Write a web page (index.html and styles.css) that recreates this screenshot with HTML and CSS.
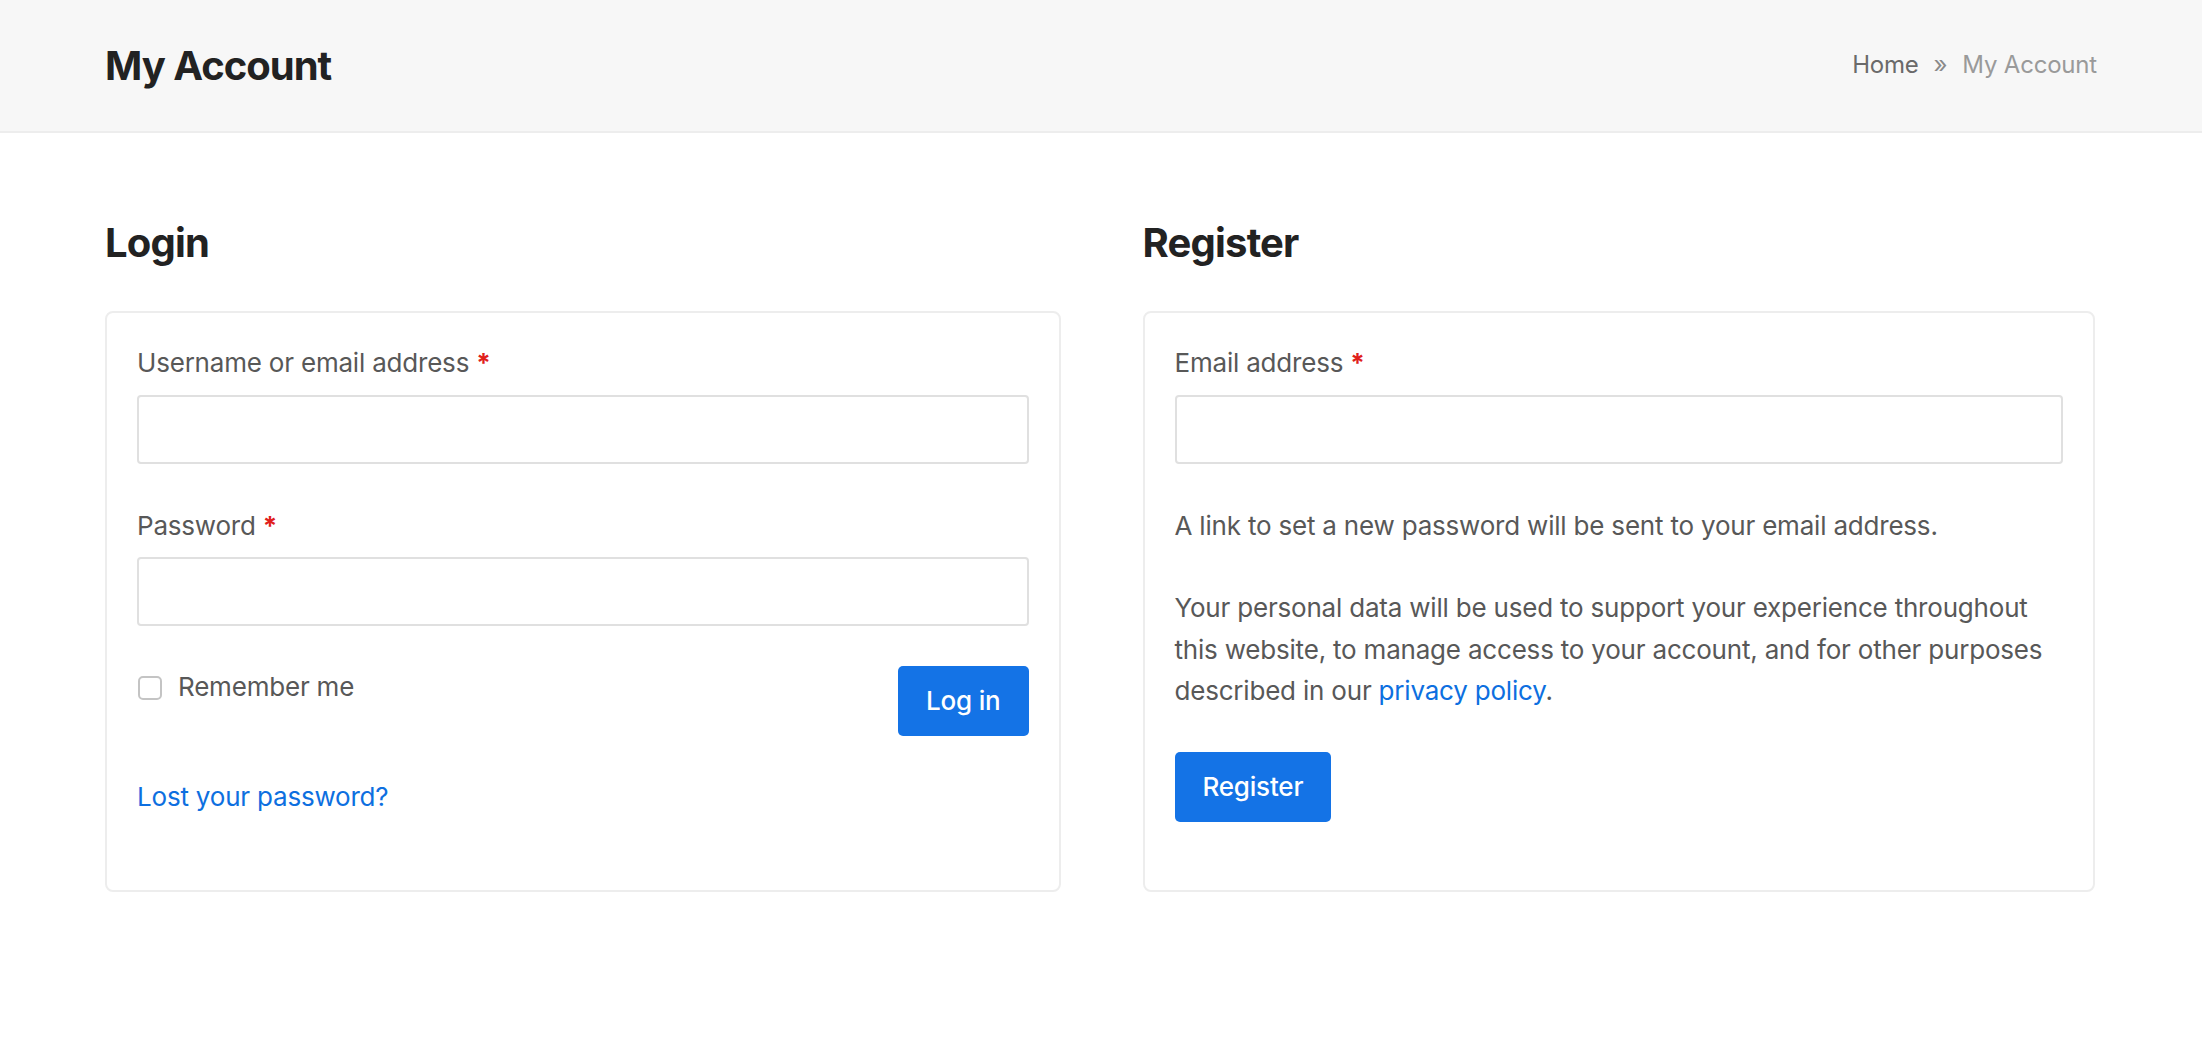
FILE: index.html
```html
<!DOCTYPE html>
<html lang="en">
<head>
<meta charset="utf-8">
<title>My Account</title>
<link rel="stylesheet" href="styles.css">
</head>
<body>
<header class="page-header">
  <div class="container header-inner">
    <h1 class="page-title">My Account</h1>
    <nav class="breadcrumb">
      <a class="crumb-link" href="#">Home</a><span class="crumb-sep">»</span><span class="crumb-current">My Account</span>
    </nav>
  </div>
</header>
<main class="container main">
  <div class="columns">
    <section class="col">
      <h2 class="col-title">Login</h2>
      <form class="card">
        <div class="field">
          <label class="field-label">Username or email address <span class="required">*</span></label>
          <input class="text-input" type="text">
        </div>
        <div class="field">
          <label class="field-label">Password <span class="required">*</span></label>
          <input class="text-input" type="password">
        </div>
        <div class="form-row">
          <label class="remember"><input class="checkbox" type="checkbox"><span>Remember me</span></label>
          <button class="btn" type="button">Log in</button>
        </div>
        <p class="lost"><a class="link" href="#">Lost your password?</a></p>
      </form>
    </section>
    <section class="col">
      <h2 class="col-title">Register</h2>
      <form class="card">
        <div class="field">
          <label class="field-label">Email address <span class="required">*</span></label>
          <input class="text-input" type="email">
        </div>
        <p class="note">A link to set a new password will be sent to your email address.</p>
        <p class="privacy">Your personal data will be used to support your experience throughout this website, to manage access to your account, and for other purposes described in our <a class="link" href="#">privacy policy</a>.</p>
        <div class="btn-row">
          <button class="btn" type="button">Register</button>
        </div>
      </form>
    </section>
  </div>
</main>
</body>
</html>
```

FILE: styles.css
```css
* { box-sizing: border-box; }

html, body {
  margin: 0;
  padding: 0;
  background: #ffffff;
}

body {
  font-family: "Inter", "Liberation Sans", sans-serif;
  font-size: 26px;
  line-height: 1.6;
  letter-spacing: -0.2px;
  color: #585858;
}

.container {
  max-width: 1992px;
  margin: 0 auto;
}

.page-header {
  background: #f7f7f7;
  border-bottom: 2px solid #ededed;
}

.header-inner {
  height: 131px;
  display: flex;
  align-items: center;
  justify-content: space-between;
}

.page-title {
  margin: 0;
  font-size: 40px;
  line-height: 1.2;
  font-weight: 700;
  letter-spacing: -0.025em;
  color: #222222;
}

.breadcrumb {
  font-size: 24px;
  line-height: 1.6;
  color: #999999;
  display: flex;
  align-items: center;
}

.crumb-link {
  color: #6a6a6a;
  text-decoration: none;
}

.crumb-sep {
  padding: 0 15px;
  color: #8a8a8a;
}

.crumb-current {
  color: #9a9a9a;
}

.main {
  padding-top: 86px;
  padding-bottom: 80px;
}

.columns {
  display: grid;
  grid-template-columns: 955fr 952fr;
  column-gap: 82px;
  margin-right: 2px;
}

.col {
  display: flex;
  flex-direction: column;
}

.col-title {
  margin: 0 0 44px;
  font-size: 40px;
  line-height: 1.2;
  font-weight: 700;
  letter-spacing: -0.02em;
  color: #222222;
}

.card {
  flex: 1;
  margin: 0;
  border: 2px solid #ededed;
  border-radius: 8px;
  padding: 29px 30px 68px;
}

.field {
  display: flex;
  flex-direction: column;
}

.field + .field {
  margin-top: 41px;
}

.field-label {
  display: block;
  margin-bottom: 11px;
}

.required {
  color: #e0201b;
  font-weight: 700;
}

.text-input {
  display: block;
  width: 100%;
  height: 69px;
  border: 2px solid #e0e0e0;
  border-radius: 4px;
  background: #ffffff;
  font: inherit;
  padding: 0 16px;
  margin: 0;
}

.form-row {
  margin-top: 40px;
  display: flex;
  justify-content: space-between;
  align-items: flex-start;
}

.remember {
  display: flex;
  align-items: center;
  gap: 16px;
}

.checkbox {
  appearance: none;
  -webkit-appearance: none;
  width: 24px;
  height: 24px;
  margin: 2px 0 0 1px;
  border: 2px solid #c4c4c4;
  border-radius: 5px;
  background: #ffffff;
}

.btn {
  height: 70px;
  padding: 0 28px;
  border: none;
  border-radius: 5px;
  background: #1473e6;
  color: #ffffff;
  font: inherit;
  font-weight: 500;
  letter-spacing: -0.2px;
  cursor: pointer;
}

.lost {
  margin: 40px 0 0;
}

.link {
  color: #0d6fe0;
  text-decoration: none;
}

.note {
  margin: 41px 0 0;
}

.privacy {
  margin: 41px 0 0;
}

.btn-row {
  margin-top: 40px;
}
```
